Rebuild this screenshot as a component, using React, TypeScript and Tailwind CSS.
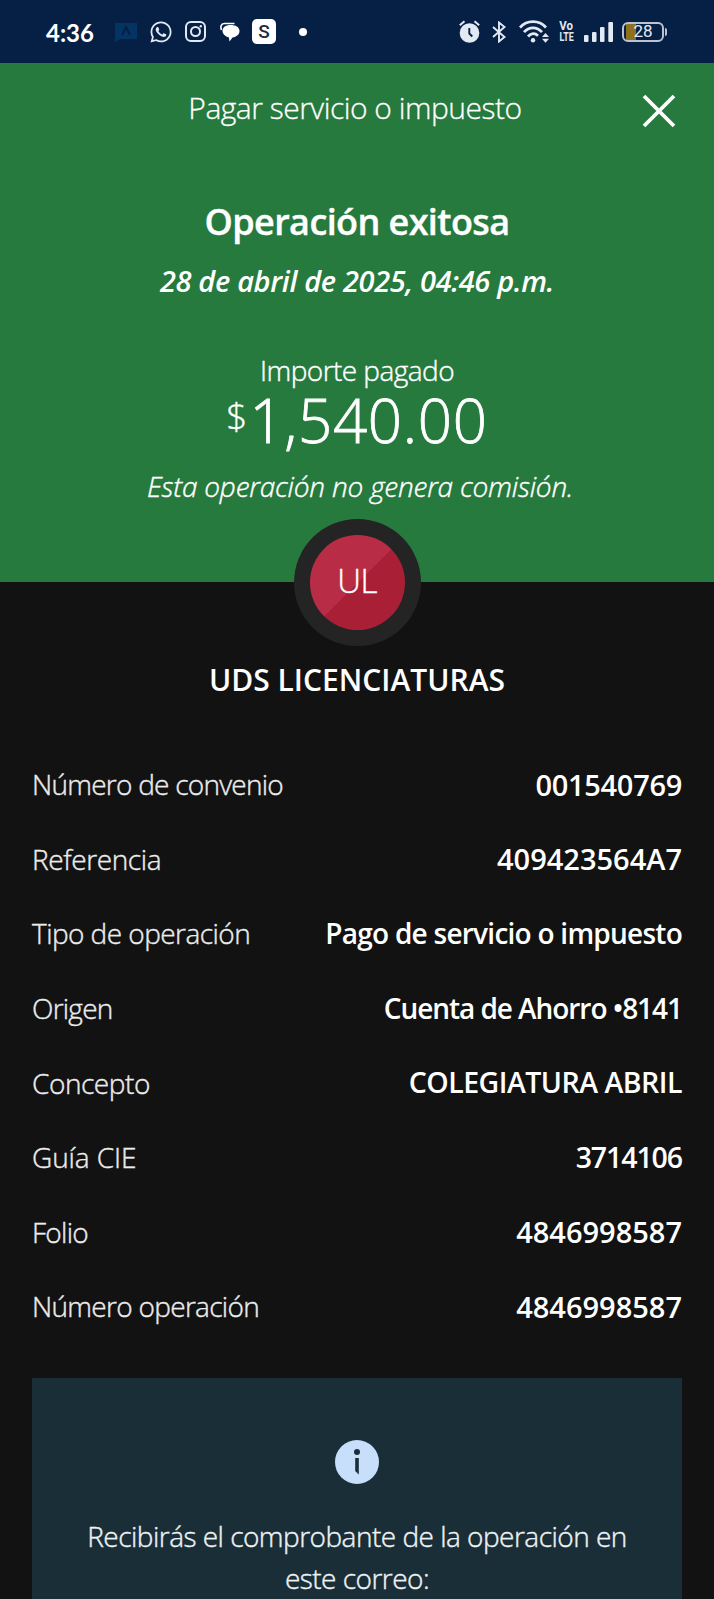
import { FaWhatsapp } from 'react-icons/fa';

interface Detail {
  label: string;
  value: string;
  labelClass: string;
  valueClass: string;
}

const details: Detail[] = [
  { label: 'Número de convenio', value: '001540769', labelClass: 'tracking-[-0.75px]', valueClass: 'text-[29px] tracking-[-0.3px]' },
  { label: 'Referencia', value: '409423564A7', labelClass: 'tracking-[-0.4px]', valueClass: 'text-[29px]' },
  { label: 'Tipo de operación', value: 'Pago de servicio o impuesto', labelClass: 'tracking-[-0.55px]', valueClass: 'text-[28px] tracking-[-0.75px]' },
  { label: 'Origen', value: 'Cuenta de Ahorro •8141', labelClass: 'tracking-[-0.75px]', valueClass: 'text-[28px] tracking-[-1.05px]' },
  { label: 'Concepto', value: 'COLEGIATURA ABRIL', labelClass: 'tracking-[-0.45px]', valueClass: 'text-[28.5px] tracking-[-0.5px]' },
  { label: 'Guía CIE', value: '3714106', labelClass: 'tracking-[-0.1px]', valueClass: 'text-[28.5px] tracking-[-1.1px]' },
  { label: 'Folio', value: '4846998587', labelClass: 'tracking-[-0.7px]', valueClass: 'text-[29px]' },
  { label: 'Número operación', value: '4846998587', labelClass: 'tracking-[-0.7px]', valueClass: 'text-[29px]' },
];

export default function App() {
  return (
    <div className="w-full h-[1599px] overflow-hidden bg-[#121212] text-white font-['Open_Sans',sans-serif]">
      <StatusBar />

      {/* Success header */}
      <header className="h-[519px] bg-[#277a3e] text-center">
        <div className="grid grid-cols-[110px_1fr_110px] items-center h-[90px]">
          <h1 className="col-start-2 -ml-1 text-[30px] leading-10 font-light tracking-[-0.5px] whitespace-nowrap [-webkit-text-stroke:0.3px_white]">
            Pagar servicio o impuesto
          </h1>
          <button className="flex justify-center pt-1.5" aria-label="Cerrar">
            <svg className="w-[34px] h-[34px]" viewBox="0 0 34 34" fill="none" stroke="currentColor" strokeWidth="3.8">
              <path d="M2 2 32 32M32 2 2 32" />
            </svg>
          </button>
        </div>
        <h2 className="mt-[45px] text-[36px] leading-[48px] font-semibold tracking-[-0.6px] [-webkit-text-stroke:0.4px_white]">
          Operación exitosa
        </h2>
        <p className="mt-[15px] text-[29px] leading-10 font-semibold italic tracking-[-0.35px]">
          28 de abril de 2025, 04:46 p.m.
        </p>
        <p className="mt-[51px] text-[28px] leading-9 font-light tracking-[-0.55px] [-webkit-text-stroke:0.4px_white]">
          Importe pagado
        </p>
        <div className="flex justify-center items-start h-[60px] pt-0.5 font-light">
          <span className="mr-0.5 text-[37px] leading-[51px] [-webkit-text-stroke:0.4px_white]">$</span>
          <span className="text-[60px] leading-[60px] tracking-[0.7px] [-webkit-text-stroke:0.8px_white]">1,540.00</span>
        </div>
        <p className="mt-5 pl-1.5 text-[28px] leading-9 font-light italic tracking-[-0.2px] [-webkit-text-stroke:0.4px_white]">
          Esta operación no genera comisión.
        </p>
      </header>

      <main className="px-8">
        {/* Payee */}
        <div className="relative -mt-[63px] mx-auto w-[127px] h-[127px] rounded-full bg-[#242424] flex items-center justify-center">
          <div className="w-[95px] h-[95px] rounded-full bg-[linear-gradient(135deg,#b92c45_50%,#a91f35_50%)] flex items-center justify-center">
            <span className="-mt-1 text-[33px] leading-none font-light tracking-[-0.5px] [-webkit-text-stroke:0.4px_white]">UL</span>
          </div>
        </div>
        <p className="mt-[14px] text-center text-[30px] leading-10 font-semibold">UDS LICENCIATURAS</p>

        {/* Operation details */}
        <dl className="mt-[47px]">
          {details.map((detail) => (
            <DetailRow key={detail.label} detail={detail} />
          ))}
        </dl>

        <section className="mt-[34px] h-[260px] pt-[62px] bg-[#1a2e38] text-center">
          <svg className="mx-auto w-11 h-11" viewBox="0 0 44 44">
            <circle cx="22" cy="22" r="22" fill="#c8dffb" />
            <circle cx="22" cy="12" r="3" fill="#1a2e38" />
            <path d="M20.200 18h3.600v16.500l-3.600-3.600z" fill="#1a2e38" />
          </svg>
          <p className="mt-[31px] text-[28px] leading-[42px] font-light tracking-[-0.52px] text-[#eef2f4] [-webkit-text-stroke:0.4px_#eef2f4]">
            Recibirás el comprobante de la operación en
            <br />
            este correo:
          </p>
        </section>
      </main>
    </div>
  );
}

function DetailRow({ detail }: { detail: Detail }) {
  return (
    <div className="flex items-center justify-between h-[74.600px] whitespace-nowrap">
      <dt className={`text-[28px] font-light text-[#ececec] [-webkit-text-stroke:0.4px_#ececec] ${detail.labelClass}`}>
        {detail.label}
      </dt>
      <dd className={`font-semibold ${detail.valueClass}`}>{detail.value}</dd>
    </div>
  );
}

function StatusBar() {
  return (
    <div className="flex items-center justify-between h-[63px] pl-[46px] pr-[47px] bg-[#062045] text-[#e3e9f3]">
      <div className="flex items-center">
        <span className="w-[69px] mt-0.5 text-[24px] leading-none font-bold text-white font-['Lato',sans-serif]">4:36</span>
        <svg className="w-[22px] h-[20px] mr-3" viewBox="0 0 22 20">
          <path d="M0 1h22v16H5l-5 3z" fill="#043463" />
          <path d="M7 13l4-8 4 8" fill="none" stroke="#062045" strokeWidth="2" />
        </svg>
        <FaWhatsapp className="w-[24px] h-[24px] mr-3" />
        <svg className="w-[21px] h-[21px] mr-[14px]" viewBox="0 0 21 21" fill="none" stroke="currentColor" strokeWidth="2">
          <rect x="1" y="1" width="19" height="19" rx="5" />
          <circle cx="10.500" cy="10.500" r="4.500" />
          <circle cx="15.800" cy="5.200" r="1.200" fill="currentColor" stroke="none" />
        </svg>
        <svg className="w-5 h-5 mr-3" viewBox="0 0 20 20" fill="white">
          <path d="M1.500 8C0 4.500 1.500 1.500 4.500 1.500h10" fill="none" stroke="white" strokeWidth="1.600" />
          <path d="M10.500 3c5 0 9 2 9 6 0 3.500-3 5.800-7 6.500L9.500 19.500l-.6-4C5.500 14.500 2.500 12 2.500 9c0-4 3.500-6 8-6z" />
        </svg>
        <span className="flex items-center justify-center w-6 h-[25px] rounded-[5px] bg-white text-[19px] leading-none font-medium text-[#1c2b45] font-['Roboto',sans-serif]">
          S
        </span>
        <span className="ml-[23px] w-2 h-2 rounded-full bg-white" />
      </div>

      <div className="flex items-center">
        <svg className="w-[21px] h-[23px] mr-3" viewBox="0 0 21 23">
          <circle cx="10.500" cy="13" r="9.800" fill="currentColor" />
          <path d="M.8 5.300 5.500 1.200M20.200 5.300 15.500 1.200" stroke="currentColor" strokeWidth="2" />
          <path d="M10.300 8v5.500l3 3" fill="none" stroke="#062045" strokeWidth="1.900" />
        </svg>
        <svg className="w-[14px] h-[22px] mr-[13px]" viewBox="0 0 14 22" fill="none" stroke="currentColor" strokeWidth="1.900">
          <path d="M1 6l11.500 10L7 20.500v-19L12.500 6 1 16" />
        </svg>
        <svg className="w-[30px] h-[23px] mr-[10px]" viewBox="0 0 30 23" fill="none" stroke="currentColor" strokeWidth="2.700">
          <path d="M1 7.500C8-.3 20-.3 27 7.500M5 12.200c5-5.800 13-5.800 18 0M9 16.500c3-3.500 7-3.800 10-.8" />
          <circle cx="14" cy="20.300" r="2.200" fill="currentColor" stroke="none" />
          <path d="M23 17h7l-3.500-4zM23 18.800h7l-3.500 4z" fill="currentColor" stroke="none" />
        </svg>
        <span className="flex flex-col items-center w-[15px] mr-[10px] text-[12px] leading-[11px] font-bold font-['Roboto',sans-serif]">
          <span className="scale-x-[0.95]">Vo</span>
          <span className="scale-x-[0.74]">LTE</span>
        </span>
        <svg className="w-[29px] h-5 mr-[9px]" viewBox="0 0 29 20" fill="currentColor">
          <rect x="0" y="13" width="4.500" height="7" rx="1" />
          <rect x="8" y="10" width="4.500" height="10" rx="1" />
          <rect x="16" y="5" width="4.500" height="15" rx="1" />
          <rect x="24.300" y="0" width="4.700" height="20" rx="1" />
        </svg>
        <span className="flex items-center justify-center w-[42px] h-5 rounded-[6px] border-2 border-[#b9c3d1] bg-[linear-gradient(90deg,transparent_2px,#8f701c_2px,#8f701c_12px,transparent_12px)] text-[17px] leading-none font-['Roboto',sans-serif]">
          28
        </span>
        <span className="ml-px w-[2px] h-2 rounded-r bg-[#b9c3d1]" />
      </div>
    </div>
  );
}
